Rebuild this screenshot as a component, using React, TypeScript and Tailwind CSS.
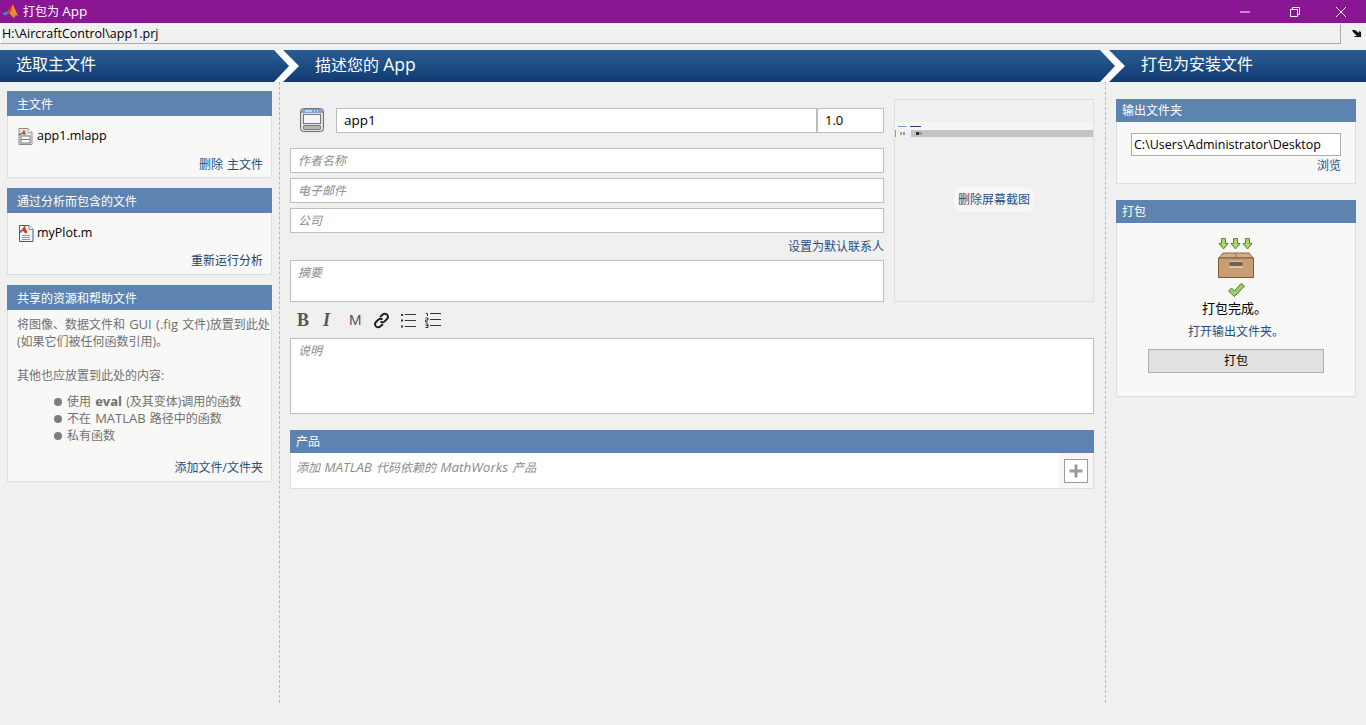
import type { ReactNode } from "react";

const font = "font-['Open_Sans','Noto_Sans_CJK_SC',sans-serif]";

function MatlabLogo() {
  return (
    <svg width="17" height="16" viewBox="0 0 17 16">
      <path d="M0 9.5 L4.5 7.5 L6.5 9.5 L3.5 11.5 Z" fill="#4f86b8" />
      <path d="M4.5 7.5 L8 4.5 L10.5 0.5 L12 1 L9 7 L6.5 9.5 Z" fill="#b8501c" />
      <path d="M10.5 0.5 C12.5 3 14.5 9 16.5 12.5 L14 11 L11.5 14.5 C10.5 12 8.5 10.5 7 9.5 L9 7 Z" fill="#ee8a2a" />
    </svg>
  );
}

function FileAppIcon() {
  return (
    <svg width="15" height="17" viewBox="0 0 15 17">
      <path d="M1 0.5 H10 L14 4.5 V16.5 H1 Z" fill="#e8e8e8" stroke="#8c8c8c" />
      <path d="M10 0.5 V4.5 H14" fill="#fff" stroke="#a5a5a5" />
      <rect x="3" y="8" width="9" height="7" fill="#fff" stroke="#777" />
      <path d="M3 11.5 H12" stroke="#777" />
      <path d="M1 6 L4 4.5 L6 1.5 L8 6 L6 7 L4 5.5 Z" fill="#c9571f" />
      <path d="M0.5 6.5 L3 5 L4 6 L2 7.5 Z" fill="#3f78ad" />
    </svg>
  );
}

function FileMIcon() {
  return (
    <svg width="16" height="17" viewBox="0 0 16 17">
      <path d="M1.5 0.5 H11 L15 4.5 V16.5 H1.5 Z" fill="#f4f6fa" stroke="#4d5a75" />
      <path d="M11 0.5 V4.5 H15" fill="#fff" stroke="#7a869c" />
      <path d="M4 10.5 H12 M4 12.5 H12 M4 14.5 H12" stroke="#8d98b0" />
      <path d="M1 6.5 L4 4.5 L6.5 0.5 L9.5 7.5 L7.5 8.5 L5 6 Z" fill="#d0461a" />
      <path d="M0.5 7 L3 5.5 L4.5 6.5 L2.5 8 Z" fill="#3f78ad" />
    </svg>
  );
}

function WindowIcon() {
  return (
    <svg width="25" height="26" viewBox="0 0 25 26">
      <rect x="1" y="2" width="23" height="23" rx="3" fill="#d5d5d5" opacity="0.5" />
      <rect x="0.5" y="0.5" width="23" height="23" rx="3" fill="#dedede" stroke="#6f7277" />
      <path d="M1 4 Q1 1 4 1 H20 Q23 1 23 4 V5 H1 Z" fill="#7fa4cc" />
      <path d="M5 3 H12 M14 3 H15 M17 3 H18" stroke="#fff" />
      <rect x="3.5" y="6.5" width="17" height="9" fill="#f6f6f6" stroke="#77797d" />
      <rect x="3.5" y="17.5" width="17" height="4" rx="1" fill="#b5b5b5" stroke="#77797d" />
    </svg>
  );
}

function PackageIcon() {
  const arrow = "M3 0.5 H7 V5.5 H9.5 L5 11 L0.5 5.5 H3 Z";
  return (
    <svg width="36" height="40" viewBox="0 0 36 40">
      <path d={arrow} fill="#a6d56b" stroke="#4f8a32" transform="translate(0.5 0)" />
      <path d={arrow} fill="#a6d56b" stroke="#4f8a32" transform="translate(12.5 0)" />
      <path d={arrow} fill="#a6d56b" stroke="#4f8a32" transform="translate(24.5 0)" />
      <path d="M1 20 L5 15 H31 L35 20 Z" fill="#cfae8c" stroke="#8a6a48" />
      <path d="M18 15 V20" stroke="#8a6a48" />
      <rect x="0.5" y="20" width="35" height="19.5" fill="#c99d74" stroke="#7f5a36" />
      <rect x="11.5" y="23" width="13" height="7" fill="#e2c4a2" />
      <rect x="11.5" y="24" width="13" height="4" fill="#6d6259" />
    </svg>
  );
}

function CheckIcon() {
  return (
    <svg width="17" height="14" viewBox="0 0 17 14">
      <path d="M0.5 8 L3.5 5 L6.5 8 L13 0.5 L16.5 3 L6.5 13.5 Z" fill="#9bd06a" stroke="#4c7a33" />
    </svg>
  );
}

function Panel({ title, headClass, className, children }: { title: string; headClass: string; className: string; children: ReactNode }) {
  return (
    <section className={className}>
      <div className={`${headClass} bg-[#5d84b0] text-[12px] text-white`}>{title}</div>
      <div className="flex-1 border border-t-0 border-[#dedede] bg-[#f8f8f6]">{children}</div>
    </section>
  );
}

function Field({ placeholder }: { placeholder: string }) {
  return (
    <div className="h-[25px] border border-[#bdbdbd] bg-white pl-[7px] text-[12px] leading-[24px] text-[#8c8c8c] italic">
      {placeholder}
    </div>
  );
}

export default function App() {
  return (
    <div className={`${font} flex h-[725px] w-[1366px] flex-col overflow-hidden bg-[#f0f0f0] text-[12px] text-black`}>
      {/* title bar */}
      <div className="flex h-[23px] items-center bg-[#8a1694] pl-[2px] text-white">
        <MatlabLogo />
        <span className="ml-1 text-[12px]">打包为 <span className="text-[13.5px]">App</span></span>
        <div className="ml-auto flex items-center">
          <svg width="12" height="12" viewBox="0 0 12 12" className="mr-[38px]">
            <path d="M1 6 H11" stroke="#fff" />
          </svg>
          <svg width="12" height="12" viewBox="0 0 12 12" className="mr-[34px]">
            <path d="M1.5 3.5 H8.5 V10.5 H1.5 Z M3.5 3.5 V1.5 H10.5 V8.5 H8.5" fill="none" stroke="#fff" />
          </svg>
          <svg width="12" height="12" viewBox="0 0 12 12" className="mr-[19px]">
            <path d="M1 1 L11 11 M11 1 L1 11" stroke="#fff" />
          </svg>
        </div>
      </div>

      {/* path bar */}
      <div className="mt-px flex h-[20px]">
        <div className="h-5 w-[1341px] border border-[#acacac] border-t-white border-l-white bg-[#f0f0f0] pl-px text-[12.5px] leading-[17px]">
          H:\AircraftControl\app1.prj
        </div>
        <svg width="10" height="8" viewBox="0 0 10 8" className="mt-[6px] ml-[11px]">
          <path d="M0 0 H3 L7 3 V1 L9 2 V7 H3 L2 6 H5 L1 2 Z" fill="#111" />
        </svg>
      </div>

      {/* step header */}
      <div className="mt-[6px] flex h-[32px] bg-gradient-to-b from-[#295e93] to-[#113b72] text-[16px] leading-[28px] text-white">
        <div className="w-[274px] pl-4">选取主文件</div>
        <svg width="25" height="32" viewBox="0 0 25 32" className="shrink-0">
          <path d="M0 0 H9 L25 16 L9 32 H0 L15 16 Z" fill="#fff" />
        </svg>
        <div className="w-[801px] pl-4">描述您的 <span className="text-[17.5px]">App</span></div>
        <svg width="25" height="32" viewBox="0 0 25 32" className="shrink-0">
          <path d="M0 0 H9 L25 16 L9 32 H0 L15 16 Z" fill="#fff" />
        </svg>
        <div className="flex-1 pl-4">打包为安装文件</div>
      </div>

      <div className="flex h-[621px]">
        {/* left column */}
        <div className="flex w-[279px] flex-col gap-2.5 pt-[9px] pr-[7px] pl-[7px]">
          <Panel title="主文件" headClass="h-[25px] pl-2.5 leading-[27px]" className="flex h-[87px] flex-col">
            <div className="flex h-[39px] items-center gap-1 pt-[2px] pl-2.5 text-[12.5px]">
              <FileAppIcon />
              <span>app1.mlapp</span>
            </div>
            <div className="pt-px pr-2 text-right leading-[18px] text-[#1f4f86] [word-spacing:1px]">删除 主文件</div>
          </Panel>
          <Panel title="通过分析而包含的文件" headClass="h-[25px] pl-2.5 leading-[27px]" className="flex h-[87px] flex-col">
            <div className="flex h-[39px] items-center gap-[3px] pt-[2px] pl-2.5 text-[12.5px]">
              <FileMIcon />
              <span>myPlot.m</span>
            </div>
            <div className="pr-2 text-right leading-[18px] text-[#1f3f66]">重新运行分析</div>
          </Panel>
          <Panel title="共享的资源和帮助文件" headClass="h-[25px] pl-2.5 leading-[27px]" className="flex h-[197px] flex-col">
            <div className="h-[137px] pt-[6px] pl-[9px] leading-[17px] whitespace-nowrap text-[#707070] [word-spacing:1px]">
              <p>将图像、数据文件和 <span className="text-[13px]">GUI (.fig</span> 文件)放置到此处</p>
              <p>(如果它们被任何函数引用)。</p>
              <p className="mt-[17px]">其他也应放置到此处的内容:</p>
              <ul className="mt-[9px] pl-[37px]">
                {[
                  <>使用 <b className="text-[13px] font-bold">eval</b> (及其变体)调用的函数</>,
                  <>不在 <span className="text-[13px]">MATLAB</span> 路径中的函数</>,
                  <>私有函数</>,
                ].map((item, i) => (
                  <li key={i} className="flex h-[17px] items-center gap-[5px]">
                    <span className="h-2 w-2 rounded-full bg-[#7d7d7d]" />
                    <span>{item}</span>
                  </li>
                ))}
              </ul>
            </div>
            <div className="pt-3 pr-2 text-right leading-[18px] text-[#1f4f86]">添加文件/文件夹</div>
          </Panel>
        </div>

        {/* center column */}
        <div className="flex w-[827px] flex-col border-x border-dashed border-[#b8b8b8] pr-[11px] pl-2.5">
          <div className="flex h-[220px] gap-2.5">
            <div className="flex w-[594px] flex-col pt-[26px]">
              <div className="flex h-[25px]">
                <div className="w-[46px] pl-2.5">
                  <WindowIcon />
                </div>
                <div className="w-[481px] border border-[#bdbdbd] bg-white pl-[7px] text-[13.5px] leading-[22px]">app1</div>
                <div className="flex-1 border border-[#bdbdbd] bg-white pl-[7px] text-[13px] leading-[22px]">1.0</div>
              </div>
              <div className="mt-[15px] flex flex-col gap-[5px]">
                <Field placeholder="作者名称" />
                <Field placeholder="电子邮件" />
                <Field placeholder="公司" />
              </div>
              <div className="mt-[5px] h-[22px] text-right leading-[18px] text-[#1f4f86]">设置为默认联系人</div>
              <div className="h-[42px] border border-[#bdbdbd] bg-white pl-[7px] leading-[24px] text-[#8c8c8c] italic">摘要</div>
            </div>
            <div className="relative mt-[17px] h-[203px] w-[200px] border border-[#dedede] pt-[22px]">
              <div className="flex h-2 items-center gap-[3px] bg-[#f5f5f5] pl-[3px]">
                <span className="h-px w-[9px] bg-[#7d9cc4]" />
                <span className="h-px w-[11px] bg-[#27406e]" />
              </div>
              <div className="flex h-[7px] bg-[#c4c4c4]">
                <div className="flex w-4 items-center gap-px border-l border-[#999] bg-[#f0f0f0] pl-1">
                  <span className="h-[3px] w-[2px] bg-[#d99a3a]" />
                  <span className="h-[3px] w-[2px] bg-[#7d9cc4]" />
                </div>
                <div className="flex items-center pl-[5px]">
                  <span className="h-[3px] w-[3px] bg-[#1f2f66]" />
                  <span className="h-[3px] w-[3px] bg-[#b89a5a]" />
                </div>
              </div>
              <div className="absolute top-[87px] left-[59px] h-[25px] rounded-[8px] bg-[#f7f7f7] px-1 leading-[25px] text-[#1f4f86]">删除屏幕截图</div>
            </div>
          </div>

          {/* formatting toolbar */}
          <div className="flex h-9 items-center pl-[7px] text-[#555]">
            <span className="w-[26px] font-['Liberation_Serif',serif] text-[18px] font-bold">B</span>
            <span className="w-[26px] font-['Liberation_Serif',serif] text-[18px] font-bold italic">I</span>
            <span className="w-[24px] font-['Liberation_Sans',sans-serif] text-[15px]">M</span>
            <svg width="17" height="17" viewBox="0 0 17 17" className="mr-[11px]" fill="none" stroke="#222" strokeWidth="2">
              <path d="M7 5 L9.5 2.8 Q11.5 1 14 2.5 Q16 5 14 7 L11.5 9.5 Q9.5 11 7.5 9.5" />
              <path d="M10 12 L7.5 14.2 Q5.5 16 3 14.5 Q1 12 3 10 L5.5 7.5 Q7.5 6 9.5 7.5" />
            </svg>
            <svg width="15" height="15" viewBox="0 0 15 15" className="mr-[9px]" stroke="#333">
              <path d="M3 1.5 H15 M3 7.5 H15 M3 13.5 H15" transform="translate(1 0) scale(0.93 1)" />
              <rect x="0" y="1" width="2" height="2" fill="#333" stroke="none" />
              <rect x="0" y="6.5" width="2" height="2" fill="#333" stroke="none" />
              <rect x="0" y="12.5" width="2" height="2" fill="#333" stroke="none" />
            </svg>
            <svg width="16" height="16" viewBox="0 0 16 16" stroke="#333" fill="none">
              <path d="M5 1.5 H16 M5 7.5 H16 M5 13.5 H16" />
              <path d="M1 1.5 H2.5 V4 M0.5 6 H3 V8 H0.5 V10 H3 M0.5 12 H3 V15.5 H0.5 M1 13.7 H3" />
            </svg>
          </div>

          <div className="h-[76px] border border-[#bdbdbd] bg-white pt-[3px] pl-[7px] leading-[18px] text-[#8c8c8c] italic">说明</div>

          <div className="mt-4 h-[23px] bg-[#5d84b0] pl-1.5 leading-[23px] text-white">产品</div>
          <div className="flex h-9 border border-t-0 border-[#dedede] bg-white">
            <div className="flex-1 pl-[5px] leading-[28px] text-[#8c8c8c] italic [word-spacing:1px]">
              添加 <span className="text-[13.5px]">MATLAB</span> 代码依赖的 <span className="text-[13.5px]">MathWorks</span> 产品
            </div>
            <div className="flex w-[34px] items-start justify-center bg-[#f6f6f4] pt-[6px]">
              <div className="flex h-6 w-6 items-center justify-center border border-[#9c9c9c] bg-white">
                <svg width="14" height="14" viewBox="0 0 14 14">
                  <path d="M5.5 0.5 H8.5 V5.5 H13.5 V8.5 H8.5 V13.5 H5.5 V8.5 H0.5 V5.5 H5.5 Z" fill="#9a9a9a" />
                </svg>
              </div>
            </div>
          </div>
        </div>

        {/* right column */}
        <div className="flex flex-1 flex-col gap-4 pt-[17px] pr-2.5 pl-2.5">
          <Panel title="输出文件夹" headClass="h-[23px] pl-1.5 leading-[23px]" className="flex h-[85px] flex-col">
            <div className="mx-[14px] mt-[11px] h-[23px] border border-[#adadad] bg-white pl-0.5 text-[12.5px] leading-[21px] whitespace-nowrap">
              C:\Users\Administrator\Desktop
            </div>
            <div className="mt-[2px] pr-[14px] text-right leading-[16px] text-[#1f4f86]">浏览</div>
          </Panel>
          <Panel title="打包" headClass="h-[23px] pl-1.5 leading-[23px]" className="flex h-[197px] flex-col">
            <div className="flex flex-col items-center pt-[15px]">
              <PackageIcon />
              <div className="mt-[5px]">
                <CheckIcon />
              </div>
              <div className="mt-[2px] pr-[3px] text-[13px] leading-[18px]">打包完成。</div>
              <div className="mt-[6px] leading-[18px] text-[#1f4f86]">打开输出文件夹。</div>
              <div className="mt-2 h-6 w-[176px] border border-[#aeaeae] bg-[#e1e1e1] text-center leading-[22px]">打包</div>
            </div>
          </Panel>
        </div>
      </div>
    </div>
  );
}
